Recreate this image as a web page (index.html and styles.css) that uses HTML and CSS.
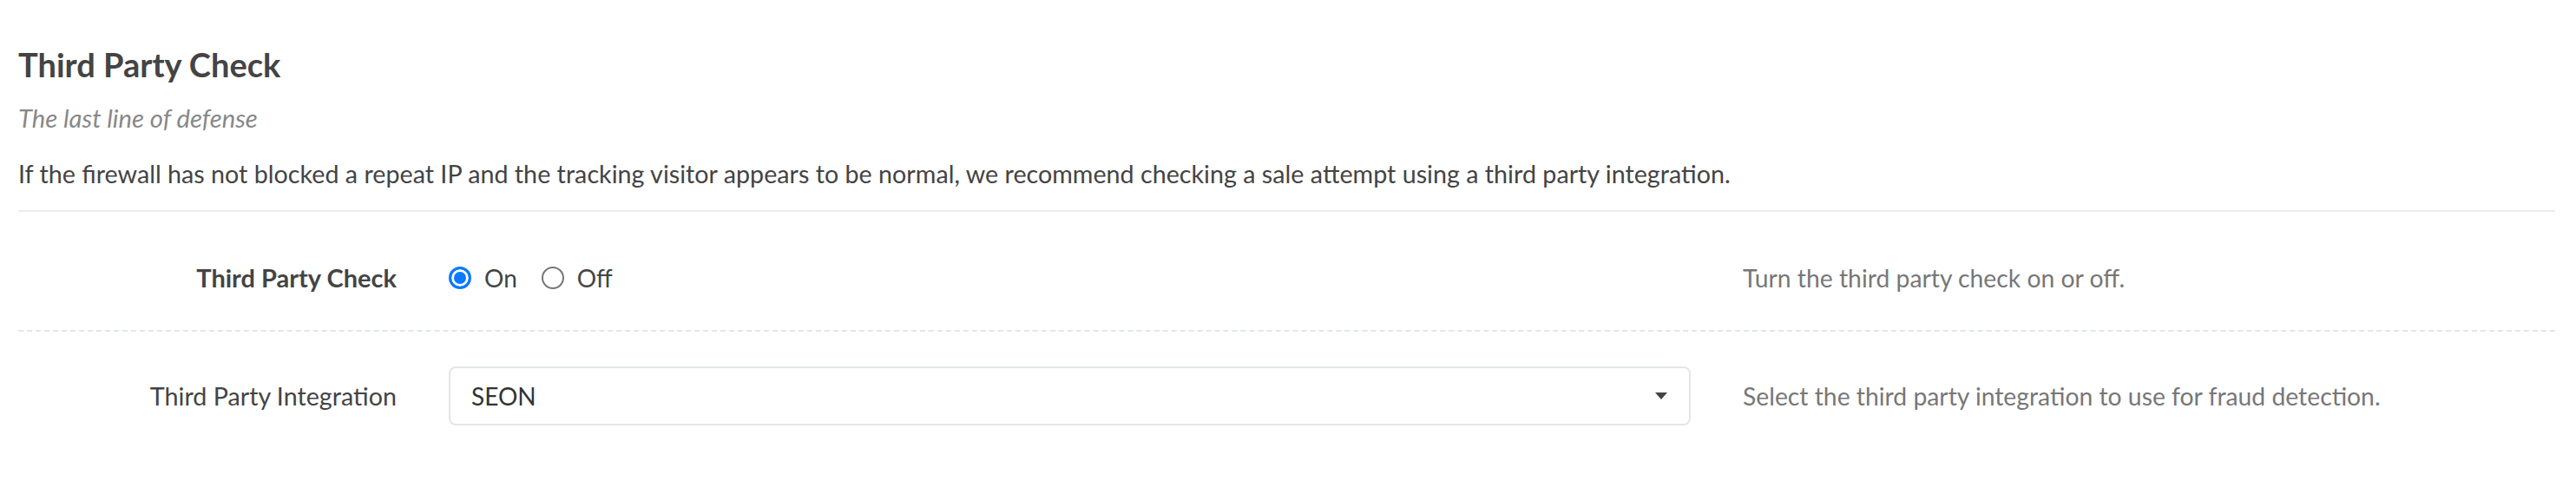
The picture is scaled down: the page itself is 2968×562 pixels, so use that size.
FILE: index.html
```html
<!DOCTYPE html>
<html lang="en">
<head>
<meta charset="utf-8">
<title>Third Party Check</title>
<link rel="stylesheet" href="styles.css">
</head>
<body>
<main class="panel">
  <header class="section-head">
    <h2 class="section-title">Third Party Check</h2>
    <p class="section-tagline">The last line of defense</p>
    <p class="section-desc">If the firewall has not blocked a repeat IP and the tracking visitor appears to be normal, we recommend checking a sale attempt using a third party integration.</p>
  </header>

  <div class="field-row">
    <div class="field-label field-label--strong">Third Party Check</div>
    <div class="field-control">
      <div class="radio-group" role="radiogroup">
        <label class="radio-option">
          <input class="radio-input" type="radio" name="tpc" value="on" checked>
          <span class="radio-text">On</span>
        </label>
        <label class="radio-option">
          <input class="radio-input" type="radio" name="tpc" value="off">
          <span class="radio-text">Off</span>
        </label>
      </div>
    </div>
    <div class="field-help">Turn the third party check on or off.</div>
  </div>

  <div class="field-row">
    <div class="field-label">Third Party Integration</div>
    <div class="field-control">
      <div class="select-box" role="combobox" aria-expanded="false">
        <span class="select-value">SEON</span>
        <svg class="select-caret" width="14" height="8" viewBox="0 0 14 8" aria-hidden="true">
          <path d="M0 0 H14 L7 8 Z" fill="#444"/>
        </svg>
      </div>
    </div>
    <div class="field-help">Select the third party integration to use for fraud detection.</div>
  </div>
</main>
</body>
</html>
```

FILE: styles.css
```css
html, body {
  margin: 0;
  padding: 0;
  background: #fff;
}

body {
  font-family: Lato, "Noto Sans", "Liberation Sans", sans-serif;
  color: #444;
}

.panel {
  padding: 50px 24px 0 21px;
}

/* heading block */
.section-head {
  padding-bottom: 22px;
  border-bottom: 2px solid #ececec;
  margin-bottom: 16px;
}

.section-title {
  margin: 0;
  font-size: 38px;
  line-height: 48px;
  font-weight: 700;
  color: #444;
}

.section-tagline {
  margin: 18px 0 0;
  font-size: 29.2px;
  line-height: 40px;
  font-style: italic;
  color: #888;
}

.section-desc {
  margin: 24px 0 0;
  font-size: 28.7px;
  line-height: 40px;
  color: #444;
}

/* form rows */
.field-row {
  display: grid;
  grid-template-columns: 436px 1431px 1fr;
  column-gap: 60px;
  align-items: center;
  padding: 40px 0;
}

.field-row + .field-row {
  border-top: 2px dashed #e3e7eb;
}

.field-label {
  text-align: right;
  font-size: 28.7px;
  line-height: 40px;
  color: #444;
}

.field-label--strong {
  font-size: 29px;
  font-weight: 700;
}

.field-help {
  font-size: 28.3px;
  line-height: 40px;
  color: #777;
}

/* radios */
.radio-group {
  display: flex;
  align-items: center;
  gap: 28px;
}

.radio-option {
  display: flex;
  align-items: center;
  gap: 15px;
  font-size: 28px;
  line-height: 40px;
  color: #444;
  cursor: pointer;
}

.radio-input {
  appearance: none;
  -webkit-appearance: none;
  margin: 0;
  width: 26px;
  height: 26px;
  border-radius: 50%;
  border: 2px solid #767676;
  background: #fff;
  box-sizing: border-box;
}

.radio-input:checked {
  border: 3px solid #0a7aff;
  background: #0a7aff;
  box-shadow: inset 0 0 0 3px #fff;
}

/* select */
.select-box {
  display: flex;
  align-items: center;
  justify-content: space-between;
  box-sizing: border-box;
  height: 68px;
  padding: 0 24px 0 24px;
  border: 2px solid #e3e6ea;
  border-radius: 8px;
  background: #fff;
}

.select-value {
  font-size: 28px;
  color: #333;
}

.select-caret {
  display: block;
  margin-right: 1px;
}
```
